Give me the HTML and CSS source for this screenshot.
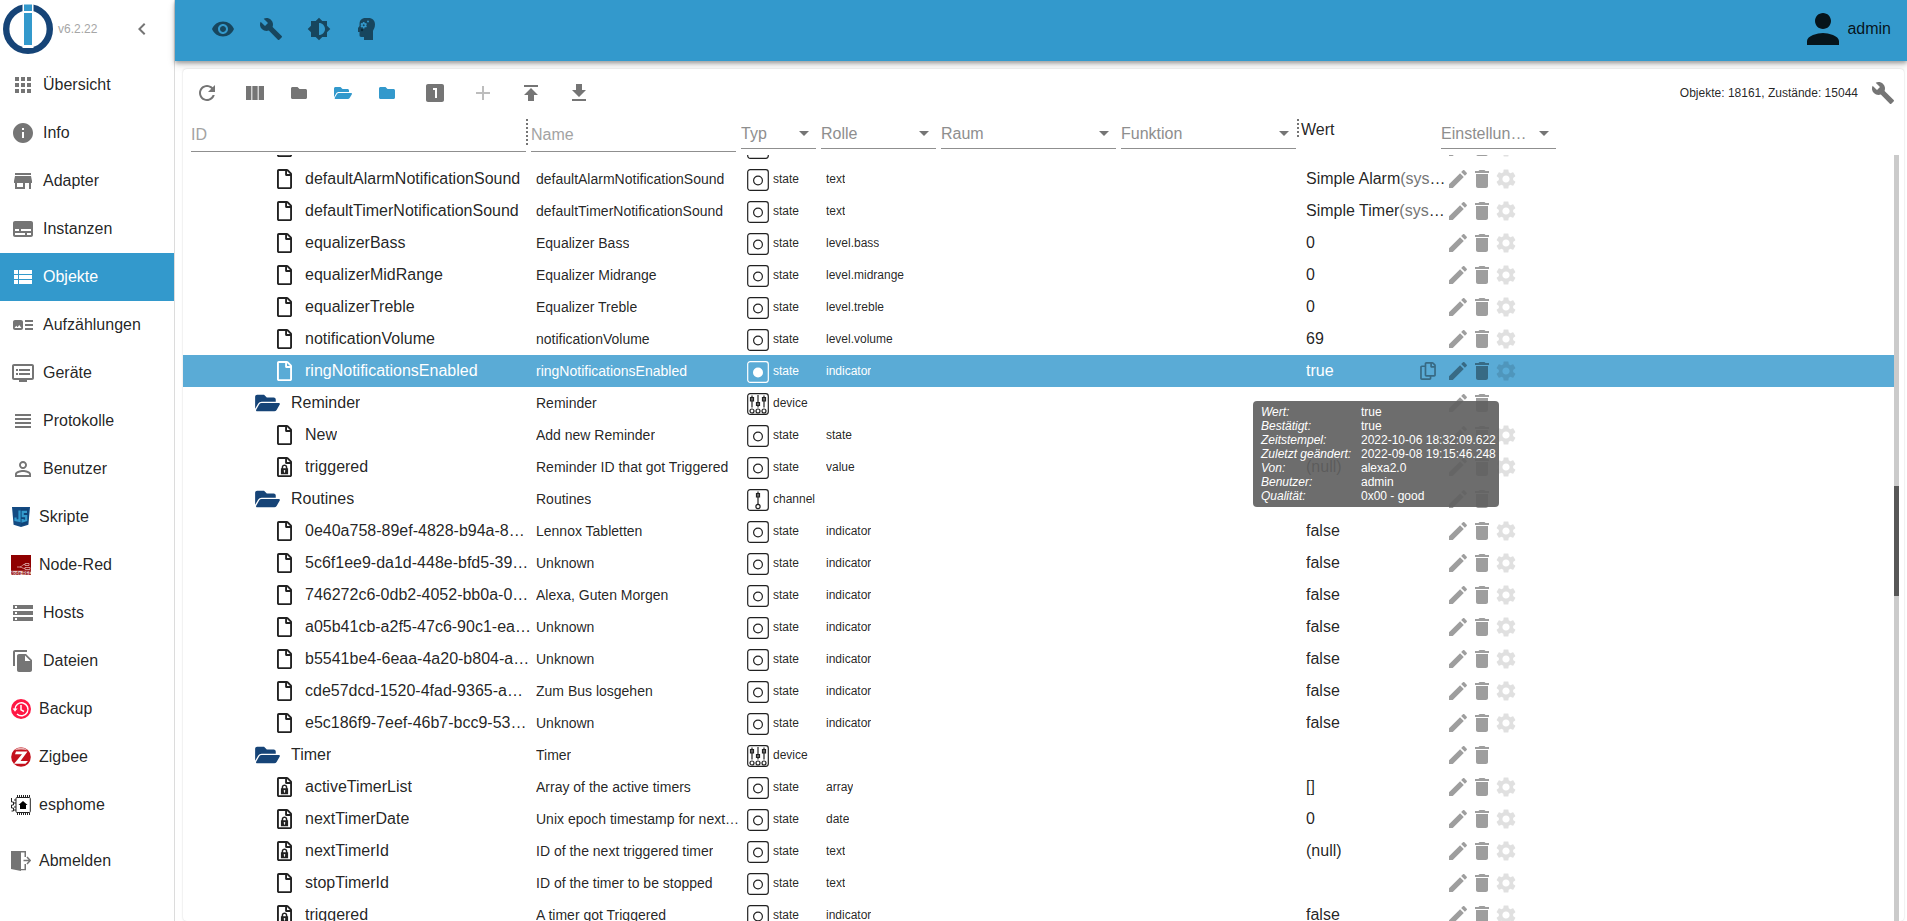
FILE: index.html
```html
<!DOCTYPE html>
<html lang="de">
<head>
<meta charset="utf-8">
<title>Objekte</title>
<link rel="stylesheet" href="styles.css">
</head>
<body>
<svg class="sprite" aria-hidden="true">
  <symbol id="i-edit" viewBox="0 0 24 24"><path d="M3 17.25V21h3.75L17.81 9.94l-3.75-3.75L3 17.25zM20.71 7.04c.39-.39.39-1.02 0-1.41l-2.34-2.34c-.39-.39-1.02-.39-1.41 0l-1.83 1.83 3.75 3.75 1.83-1.83z"/></symbol>
  <symbol id="i-delete" viewBox="0 0 24 24"><path d="M6 19c0 1.1.9 2 2 2h8c1.1 0 2-.9 2-2V7H6v12zM19 4h-3.5l-1-1h-5l-1 1H5v2h14V4z"/></symbol>
  <symbol id="i-settings" viewBox="0 0 24 24"><path d="M19.14 12.94c.04-.3.06-.61.06-.94 0-.32-.02-.64-.07-.94l2.03-1.58c.18-.14.23-.41.12-.61l-1.92-3.32c-.12-.22-.37-.29-.59-.22l-2.39.96c-.5-.38-1.03-.7-1.62-.94l-.36-2.54c-.04-.24-.24-.41-.48-.41h-3.84c-.24 0-.43.17-.47.41l-.36 2.54c-.59.24-1.13.57-1.62.94l-2.39-.96c-.22-.08-.47 0-.59.22L2.74 8.87c-.12.21-.08.47.12.61l2.03 1.58c-.05.3-.09.63-.09.94s.02.64.07.94l-2.03 1.58c-.18.14-.23.41-.12.61l1.92 3.32c.12.22.37.29.59.22l2.39-.96c.5.38 1.03.7 1.62.94l.36 2.54c.05.24.24.41.48.41h3.84c.24 0 .44-.17.47-.41l.36-2.54c.59-.24 1.13-.56 1.62-.94l2.39.96c.22.08.47 0 .59-.22l1.92-3.32c.12-.22.07-.47-.12-.61l-2.01-1.58zM12 15.6c-1.98 0-3.6-1.62-3.6-3.6s1.62-3.6 3.6-3.6 3.6 1.62 3.6 3.6-1.62 3.6-3.6 3.6z"/></symbol>
  <symbol id="i-build" viewBox="0 0 24 24"><path d="M22.7 19l-9.1-9.1c.9-2.3.4-5-1.5-6.9-2-2-5-2.4-7.4-1.3L9 6 6 9 1.6 4.7C.4 7.1.9 10.1 2.9 12.1c1.9 1.9 4.6 2.4 6.9 1.5l9.1 9.1c.4.4 1 .4 1.4 0l2.3-2.3c.5-.4.5-1.1.1-1.4z"/></symbol>
  <symbol id="i-folder" viewBox="0 0 512 512"><path d="M464 128H272l-64-64H48C21.49 64 0 85.49 0 112v288c0 26.51 21.49 48 48 48h416c26.51 0 48-21.49 48-48V176c0-26.51-21.49-48-48-48z"/></symbol>
  <symbol id="i-folder-open" viewBox="0 0 576 512"><path d="M572.694 292.093L500.27 416.248A63.997 63.997 0 0 1 444.989 448H45.025c-18.523 0-30.064-20.093-20.731-36.093l72.424-124.155A64 64 0 0 1 152 256h399.964c18.523 0 30.064 20.093 20.73 36.093zM152 224h328v-48c0-26.51-21.49-48-48-48H272l-64-64H48C21.49 64 0 85.49 0 112v278.046l69.077-118.418C86.214 242.25 117.989 224 152 224z"/></symbol>
  <symbol id="i-file" viewBox="0 0 384 512"><path d="M369.9 97.9L286 14C277 5 264.8-.1 252.1-.1H48C21.5 0 0 21.5 0 48v416c0 26.5 21.5 48 48 48h288c26.5 0 48-21.5 48-48V131.9c0-12.7-5.1-25-14.1-34zM332.1 128H256V51.9l76.1 76.1zM48 464V48h160v104c0 13.3 10.7 24 24 24h104v288H48z"/></symbol>
  <symbol id="i-file-lock" viewBox="0 0 384 512"><path d="M369.9 97.9L286 14C277 5 264.8-.1 252.1-.1H48C21.5 0 0 21.5 0 48v416c0 26.5 21.5 48 48 48h288c26.5 0 48-21.5 48-48V131.9c0-12.7-5.1-25-14.1-34zM332.1 128H256V51.9l76.1 76.1zM48 464V48h160v104c0 13.3 10.7 24 24 24h104v288H48z"/><path fill-rule="evenodd" d="M100 290h20v-25c0-95 144-95 144 0v25h20v150H100zM158 290h68v-25c0-45-68-45-68 0zM192 335c-26 0-26 36-10 42v28h20v-28c16-6 16-42-10-42z"/></symbol>
  <symbol id="i-copy" viewBox="0 0 448 512"><path d="M433.941 65.941l-51.882-51.882A48 48 0 0 0 348.118 0H176c-26.51 0-48 21.49-48 48v48H48c-26.51 0-48 21.49-48 48v320c0 26.51 21.49 48 48 48h224c26.51 0 48-21.49 48-48v-48h80c26.51 0 48-21.49 48-48V99.882a48 48 0 0 0-14.059-33.941zM266 464H54a6 6 0 0 1-6-6V150a6 6 0 0 1 6-6h74v224c0 26.51 21.49 48 48 48h96v42a6 6 0 0 1-6 6zm128-96H182a6 6 0 0 1-6-6V54a6 6 0 0 1 6-6h106v88c0 13.255 10.745 24 24 24h88v202a6 6 0 0 1-6 6zm6-256h-64V48h9.632c1.591 0 3.117.632 4.243 1.757l48.368 48.368a6 6 0 0 1 1.757 4.243V112z"/></symbol>
  <symbol id="i-state" viewBox="0 0 22 22"><rect x="0.7" y="0.7" width="20.6" height="20.6" rx="2.5" fill="none" stroke="currentColor" stroke-width="1.2"/><circle cx="11" cy="11.5" r="4.4" fill="none" stroke="currentColor" stroke-width="1.2"/></symbol>
  <symbol id="i-state-on" viewBox="0 0 22 22"><rect x="0.7" y="0.7" width="20.6" height="20.6" rx="2.5" fill="none" stroke="currentColor" stroke-width="1.2"/><circle cx="11" cy="11.5" r="5"/></symbol>
  <symbol id="i-channel" viewBox="0 0 22 22"><g fill="none" stroke="currentColor" stroke-width="1.2"><rect x="0.7" y="0.7" width="20.6" height="20.6" rx="2.5"/><path d="M11 2.5v13M9.500 4.500h3v3.500h-3z"/><circle cx="11" cy="17.5" r="2.1"/></g></symbol>
  <symbol id="i-device" viewBox="0 0 22 22"><g fill="none" stroke="currentColor" stroke-width="1.2"><rect x="0.7" y="0.7" width="20.6" height="20.6" rx="2.5"/><path d="M5 2.5v12M11 2v12.5M17 2.5v12M3.500 4.500h3v3.500h-3zM9.500 9.500h3v3h-3zM15.500 4.500h3v3.500h-3z"/><circle cx="5" cy="18" r="2"/><circle cx="11" cy="18" r="2"/><circle cx="17" cy="18" r="2"/></g></symbol>
</svg>

<div class="app">
  <aside class="sidebar">
    <div class="brand">
      <svg class="logo" viewBox="0 0 50 50"><circle cx="25" cy="25" r="21.8" fill="none" stroke="#164477" stroke-width="6.4"/><path fill="#fff" d="M19.5 0h11v44h-11z"/><path fill="#3399cc" d="M21 0.5h8V7h-8zM21 9h8v32h-8z"/></svg>
      <span class="version">v6.2.22</span>
      <button class="icon-btn collapse" aria-label="Menü einklappen"><svg class="i24" viewBox="0 0 24 24"><path d="M15.41 7.41L14 6l-6 6 6 6 1.41-1.41L10.83 12z"/></svg></button>
    </div>
    <nav class="menu">
      <a href="#"><svg class="i24" viewBox="0 0 24 24"><path d="M4 8h4V4H4v4zm6 12h4v-4h-4v4zm-6 0h4v-4H4v4zm0-6h4v-4H4v4zm6 0h4v-4h-4v4zm6-10v4h4V4h-4zm-6 4h4V4h-4v4zm6 6h4v-4h-4v4zm0 6h4v-4h-4v4z"/></svg>Übersicht</a>
      <a href="#"><svg class="i24" viewBox="0 0 24 24"><path d="M12 2C6.48 2 2 6.48 2 12s4.48 10 10 10 10-4.48 10-10S17.52 2 12 2zm1 15h-2v-6h2v6zm0-8h-2V7h2v2z"/></svg>Info</a>
      <a href="#"><svg class="i24" viewBox="0 0 24 24"><path d="M20 4H4v2h16V4zm1 10v-2l-1-5H4l-1 5v2h1v6h10v-6h4v6h2v-6h1v0zm-9 4H6v-4h6v4z"/></svg>Adapter</a>
      <a href="#"><svg class="i24" viewBox="0 0 24 24"><path d="M20 4H4c-1.1 0-2 .9-2 2v12c0 1.1.9 2 2 2h16c1.1 0 2-.9 2-2V6c0-1.1-.9-2-2-2zM4 12h4v2H4v-2zm10 6H4v-2h10v2zm6 0h-4v-2h4v2zm0-4H10v-2h10v2z"/></svg>Instanzen</a>
      <a href="#" class="active" aria-current="page"><svg class="i24" viewBox="0 0 24 24"><path d="M3 14h4v-4H3v4zm0 5h4v-4H3v4zM3 9h4V5H3v4zm5 5h13v-4H8v4zm0 5h13v-4H8v4zM8 5v4h13V5H8z"/></svg>Objekte</a>
      <a href="#"><svg class="i24" viewBox="0 0 24 24"><path d="M22 13h-8v-2h8v2zm0-6h-8v2h8V7zm-8 10h8v-2h-8v2zm-2-8v6c0 1.1-.9 2-2 2H4c-1.1 0-2-.9-2-2V9c0-1.1.9-2 2-2h6c1.1 0 2 .9 2 2zm-1.5 6l-2.25-3-1.75 2.26-1.25-1.51L3.5 15h7z"/></svg>Aufzählungen</a>
      <a href="#"><svg class="i24" viewBox="0 0 24 24"><path d="M21 3H3c-1.1 0-2 .9-2 2v12c0 1.1.9 2 2 2h5v2h8v-2h5c1.1 0 1.99-.9 1.99-2L23 5c0-1.1-.9-2-2-2zm0 14H3V5h18v12zm-2-9H8v2h11V8zm0 4H8v2h11v-2zM7 8H5v2h2V8zm0 4H5v2h2v-2z"/></svg>Geräte</a>
      <a href="#"><svg class="i24" viewBox="0 0 24 24"><path d="M4 15h16v-2H4v2zm0 4h16v-2H4v2zm0-8h16V9H4v2zm0-6v2h16V5H4z"/></svg>Protokolle</a>
      <a href="#"><svg class="i24" viewBox="0 0 24 24"><path d="M12 5.9c1.16 0 2.1.94 2.1 2.1s-.94 2.1-2.1 2.1S9.9 9.16 9.9 8s.94-2.1 2.1-2.1m0 9c2.97 0 6.1 1.46 6.1 2.1v1.1H5.9V17c0-.64 3.13-2.1 6.1-2.1M12 4C9.79 4 8 5.79 8 8s1.79 4 4 4 4-1.79 4-4-1.79-4-4-4zm0 9c-2.67 0-8 1.34-8 4v3h16v-3c0-2.66-5.33-4-8-4z"/></svg>Benutzer</a>
      <a href="#" class="adapter"><svg class="i20" viewBox="0 0 20 20"><path fill="#134a82" d="M1 0h18l-1.6 17.8L10 20l-7.400-2.200z"/><path fill="#0d3b6b" d="M10 1.500h7.400L16 16.700 10 18.500z" opacity=".5"/><path fill="none" stroke="#3399cc" stroke-width="2.200" d="M8.500 3.500v10.300L4.500 13v-2.500M16 4.800H11.700v4.400h3.500v4l-3.600 1v-2.200"/></svg>Skripte</a>
      <a href="#" class="adapter"><svg class="i20" viewBox="0 0 20 20"><path fill="#8f0000" d="M0 0h20v20H0z"/><path fill="none" stroke="#e0b0b0" stroke-width=".8" d="M6 12h3c2 0 2-2.500 4-2.500h1M9 12c2 0 2 1.500 5 1.500M14 8.500h4v2h-4zM14 12.500h5v2h-5z"/><path fill="#e9c8c8" d="M0 15.800h20V20H0z"/><text x="10" y="19.500" font-size="4.500" font-weight="bold" text-anchor="middle" fill="#8f0000" font-family="Liberation Sans, sans-serif">Node-RED</text></svg>Node-Red</a>
      <a href="#"><svg class="i24" viewBox="0 0 24 24"><path d="M2 20h20v-4H2v4zm2-3h2v2H4v-2zM2 4v4h20V4H2zm4 3H4V5h2v2zm-4 7h20v-4H2v4zm2-3h2v2H4v-2z"/></svg>Hosts</a>
      <a href="#"><svg class="i24" viewBox="0 0 24 24"><path d="M16 1H4c-1.1 0-2 .9-2 2v14h2V3h12V1zm-1 4l6 6v10c0 1.1-.9 2-2 2H7.99C6.89 23 6 22.1 6 21l.01-14c0-1.1.89-2 1.99-2h7zm-1 7h5.5L14 6.5V12z"/></svg>Dateien</a>
      <a href="#" class="adapter"><svg class="i20" viewBox="0 0 20 20"><circle cx="10" cy="10" r="10" fill="#ff1744"/><path fill="none" stroke="#fff" stroke-width="1.500" d="M4 10.500a6.500 6.500 0 1 1 2 4.500M10 6v4.800l3 1.700"/><path fill="#fff" d="M1.600 9.500h5L4 12.800z"/></svg>Backup</a>
      <a href="#" class="adapter"><svg class="i20" viewBox="0 0 20 20"><circle cx="10" cy="10" r="9.800" fill="#c4101c"/><path fill="#e8b5b5" d="M3.500 3.200a9.400 9.400 0 0 1 13 0c-4-1-9-1-13 0z"/><path fill="#fff" d="M5 4.500h11.500L9.500 14H17l-2.500 2.700H3L11 7.200H4z"/></svg>Zigbee</a>
      <a href="#" class="adapter"><svg class="i20" viewBox="0 0 20 20"><g fill="none" stroke="#222"><rect x="5" y="2.500" width="14.300" height="15" rx="1"/><path stroke-width="2" stroke-dasharray="1 1" d="M6 1h13M6 19h13"/><path d="M.5 3v4h2v3h-2v3h2v3h-2M3 5h2M3 8h2M3 12h2M3 15h2"/></g><path fill="#000" d="M12 6l4.500 4H15v4H9v-4H7.500z"/></svg>esphome</a>
      <a href="#" class="adapter logout"><svg class="i20" viewBox="0 0 20 20"><path d="M0 0h15v6h-1.500V1.500H10V18h3.500v-5H15v6.300h-5V20L0 18z"/><path fill="none" stroke="#757575" stroke-width="1.500" d="M12.500 9.500H19M16 6l3.300 3.500L16 13"/></svg>Abmelden</a>
    </nav>
  </aside>

  <div class="main">
    <header class="appbar">
      <button class="icon-btn" aria-label="Ansicht"><svg class="i24" viewBox="0 0 24 24"><path d="M12 4.5C7 4.5 2.73 7.61 1 12c1.73 4.39 6 7.5 11 7.5s9.27-3.11 11-7.5c-1.73-4.39-6-7.5-11-7.5zM12 17c-2.76 0-5-2.24-5-5s2.24-5 5-5 5 2.24 5 5-2.24 5-5 5zm0-8c-1.66 0-3 1.34-3 3s1.34 3 3 3 3-1.34 3-3-1.34-3-3-3z"/></svg></button>
      <button class="icon-btn" aria-label="Systemeinstellungen"><svg class="i24"><use href="#i-build"/></svg></button>
      <button class="icon-btn" aria-label="Farbschema"><svg class="i24" viewBox="0 0 24 24"><path d="M20 15.31L23.31 12 20 8.69V4h-4.69L12 .69 8.69 4H4v4.69L.69 12 4 15.31V20h4.69L12 23.31 15.31 20H20v-4.69zM12 18V6c3.31 0 6 2.69 6 6s-2.69 6-6 6z"/></svg></button>
      <button class="icon-btn" aria-label="Expertenmodus"><svg class="i24" viewBox="1.5 0 24 24"><path fill-rule="evenodd" d="M12 1h3c4 0 6.500 2.500 6.500 6.500 0 3.500-1.500 5-2 6.500v9h-9v-3H8c-1.700 0-2-.7-2-2v-3H4.500V11L6 9V7c0-3.500 2-6 6-6zM9.500 5l-.4 1.300-1.300-.3-.8 1.300 1 .9-1 .9.800 1.300 1.300-.3.4 1.300h1.400l.4-1.300 1.300.3.800-1.300-1-.9 1-.9-.8-1.300-1.300.3L10.900 5z"/><circle cx="10.200" cy="8.200" r="1"/><circle cx="14.500" cy="4.500" r="1" fill="#3399cc"/><circle cx="8.500" cy="13" r="1.200" fill="#0b2a3a"/></svg></button>
      <div class="user"><svg viewBox="0 0 24 24"><path d="M12 12c2.21 0 4-1.79 4-4s-1.79-4-4-4-4 1.79-4 4 1.79 4 4 4zm0 2c-2.67 0-8 1.34-8 4v2h16v-2c0-2.66-5.33-4-8-4z"/></svg><span>admin</span></div>
    </header>

    <main class="card">
      <div class="toolbar">
        <button class="icon-btn" aria-label="Aktualisieren"><svg class="i24" viewBox="0 0 24 24"><path d="M17.65 6.35C16.2 4.9 14.21 4 12 4c-4.42 0-7.99 3.58-7.99 8s3.57 8 7.99 8c3.73 0 6.84-2.55 7.73-6h-2.08c-.82 2.33-3.04 4-5.65 4-3.31 0-6-2.69-6-6s2.69-6 6-6c1.66 0 3.14.69 4.22 1.78L13 11h7V4l-2.35 2.35z"/></svg></button>
        <button class="icon-btn" aria-label="Spalten"><svg class="i24" viewBox="0 0 24 24"><path d="M14.67 5v14H9.33V5h5.34zm1 14H21V5h-5.33v14zm-7.34 0V5H3v14h5.33z"/></svg></button>
        <button class="icon-btn small" aria-label="Alle zuklappen"><svg class="i16"><use href="#i-folder"/></svg></button>
        <button class="icon-btn small blue" aria-label="Alle aufklappen"><svg class="i18"><use href="#i-folder-open"/></svg></button>
        <button class="icon-btn small blue" aria-label="Eine Ebene zuklappen"><svg class="i16"><use href="#i-folder"/></svg></button>
        <button class="icon-btn" aria-label="Zustände anzeigen"><svg class="i24" viewBox="0 0 24 24"><path d="M19 3H5c-1.1 0-2 .9-2 2v14c0 1.1.9 2 2 2h14c1.1 0 2-.9 2-2V5c0-1.1-.9-2-2-2zm-5 14h-2V9h-2V7h4v10z"/></svg></button>
        <button class="icon-btn" disabled aria-label="Objekt hinzufügen"><svg class="i24" viewBox="0 0 24 24"><path d="M19 13h-6v6h-2v-6H5v-2h6V5h2v6h6v2z"/></svg></button>
        <button class="icon-btn" aria-label="Hochladen"><svg class="i24" viewBox="0 0 24 24"><path d="M5 4v2h14V4H5zm0 10h4v6h6v-6h4l-7-7-7 7z"/></svg></button>
        <button class="icon-btn" aria-label="Herunterladen"><svg class="i24" viewBox="0 0 24 24"><path d="M19 9h-4V3H9v6H5l7 7 7-7zM5 18v2h14v-2H5z"/></svg></button>
        <span class="counts">Objekte: 18161, Zustände: 15044</span>
        <button class="icon-btn wrench" aria-label="Bearbeiten"><svg class="i24"><use href="#i-build"/></svg></button>
      </div>

      <table class="objects">
        <thead>
          <tr>
            <th class="h-id"><input type="text" placeholder="ID" aria-label="ID"></th>
            <th class="h-name"><input type="text" placeholder="Name" aria-label="Name"></th>
            <th><select aria-label="Typ"><option>Typ</option></select></th>
            <th><select aria-label="Rolle"><option>Rolle</option></select></th>
            <th><select aria-label="Raum"><option>Raum</option></select></th>
            <th class="h-func"><select aria-label="Funktion"><option>Funktion</option></select></th>
            <th class="h-value">Wert</th>
            <th><select class="narrow" aria-label="Einstellungen"><option>Einstellungen</option></select></th>
          </tr>
        </thead>
        <tbody id="rows"></tbody>
      </table>
    </main>
  </div>
</div>
<script src="app.js"></script>
</body>
</html>
```

FILE: styles.css
```css
* { box-sizing: border-box; }

body {
  margin: 0;
  background: #fff;
  color: rgba(0, 0, 0, .87);
  font-family: "Liberation Sans", Arial, sans-serif;
  font-size: 16px;
  line-height: 24px;
}

svg { display: block; flex: none; fill: currentColor; }
.sprite { display: none; }
.i24 { width: 24px; height: 24px; }
.i20 { width: 20px; height: 20px; }
.i18 { width: 18px; height: 16px; }
.i16 { width: 16px; height: 16px; }

button, input, select { font: inherit; }

.icon-btn {
  display: flex;
  align-items: center;
  justify-content: center;
  width: 48px;
  height: 48px;
  padding: 0;
  border: 0;
  background: none;
  color: #757575;
}
.icon-btn.small { width: 44px; padding-right: 4px; }
.icon-btn.blue { color: #3399cc; }
.icon-btn:disabled { color: #bdbdbd; }

.app { display: flex; height: 100vh; overflow: hidden; }

/* Sidebar */
.sidebar { flex: none; width: 175px; border-right: 1px solid #dcdcdc; }
.brand {
  display: flex;
  align-items: center;
  height: 61px;
  padding: 0 8px 4px 3px;
}
.logo { width: 50px; height: 50px; }
.version { margin-left: 5px; font-size: 12px; color: #a6a6a6; }
.collapse { margin-left: auto; }
.menu a {
  display: flex;
  align-items: center;
  gap: 8px;
  height: 48px;
  padding-left: 11px;
  color: inherit;
  text-decoration: none;
}
.menu a svg { color: #757575; }
.menu .active, .menu .active svg { color: #fff; }
.menu .active { background: #3399cc; }
.menu .logout { margin-top: 8px; }

/* Header bar */
.main { display: flex; flex-direction: column; flex: 1; min-width: 0; }
.appbar {
  display: flex;
  align-items: center;
  flex: none;
  height: 61px;
  padding: 0 16px 4px 24px;
  background: #3399cc;
  box-shadow: 0 2px 4px rgba(0, 0, 0, .3), 0 4px 8px rgba(0, 0, 0, .14);
}
.appbar .icon-btn { color: rgba(0, 0, 0, .54); }
.user { display: flex; align-items: center; margin-left: auto; }
.user svg { width: 48px; height: 48px; }

/* Object browser */
.card {
  display: flex;
  flex-direction: column;
  flex: 1;
  min-height: 0;
  margin: 8px 3px 0 8px;
  border-radius: 4px;
  background: #fff;
  box-shadow: 0 0 2px rgba(0, 0, 0, .2);
}
.toolbar { display: flex; align-items: center; flex: none; height: 48px; }
.counts { margin-left: auto; font-size: 12px; }
.wrench { width: 46px; padding-left: 4px; }

.objects { display: flex; flex-direction: column; flex: 1; min-height: 0; }
.objects thead { display: block; flex: none; height: 38px; }
.objects tr {
  display: grid;
  grid-template-columns: 348px 211px 79px 120px 180px 180px 145px 1fr;
}
.objects thead tr { grid-template-columns: 348px 210px 80px 120px 180px 180px 140px 1fr; }
th, td { padding: 0; font-weight: 400; text-align: left; white-space: nowrap; min-width: 0; }

thead th { height: 36px; padding-right: 5px; }
th input, th select {
  display: block;
  width: 100%;
  padding: 2px 0 0;
  border: 0;
  border-bottom: 1px solid #8f8f8f;
  border-radius: 0;
  background: none;
  color: #8e8e8e;
  outline: 0;
}
th input { height: 35px; }
th input::placeholder { color: #a3a3a3; opacity: 1; }
th select {
  height: 32px;
  padding-right: 24px;
  appearance: none;
  text-overflow: ellipsis;
  background: url("data:image/svg+xml,%3Csvg xmlns='http://www.w3.org/2000/svg' width='10' height='5'%3E%3Cpath fill='%23757575' d='M0 0h10L5 5z'/%3E%3C/svg%3E") no-repeat right 7px top 14px;
}
th .narrow { width: 115px; }
.h-id { padding-left: 8px; }
.h-id, .h-func {
  background: repeating-linear-gradient(#757575 0 2px, transparent 2px 4px) no-repeat right 3px top 2px / 2px 28px;
}
.h-func { background-size: 2px 20px; background-position: right 2px top 2px; }
.h-value { padding-top: 1px; }

tbody {
  display: block;
  flex: 1;
  min-height: 0;
  overflow: hidden;
  margin-right: 5px;
  padding-right: 5px;
  background:
    linear-gradient(#575757, #575757) no-repeat right 50.5% / 5px 110px,
    linear-gradient(#cbcbcb, #cbcbcb) no-repeat right top / 5px 100%;
}
tbody tr { position: relative; height: 32px; }
tbody tr:first-child { margin-top: -24px; }
tbody td { display: flex; align-items: center; height: 32px; padding-left: 5px; }
td span { overflow: hidden; text-overflow: ellipsis; }

td.id { gap: 13px; padding-left: 94px; }
td.id svg { width: 15px; height: 20px; }
tr.branch td.id { gap: 11px; padding-left: 72px; }
tr.branch td.id svg { width: 25px; height: 22px; color: #164477; }
td.name { font-size: 14px; }
td.type { gap: 4px; font-size: 12px; }
td.type svg { width: 22px; height: 22px; margin-top: 2px; }
td.role { font-size: 12px; }
td.value small { font-size: 16px; color: #757575; }
td.value button { margin-left: auto; margin-right: 8px; }
td button {
  display: flex;
  padding: 0;
  border: 0;
  background: none;
  color: inherit;
}
td.actions { padding-left: 0; color: rgba(0, 0, 0, .38); }
td.actions button:nth-child(3) { color: rgba(0, 0, 0, .12); }
td .copy svg { width: 20px; height: 18px; }

tr.selected { background: #5aabd6; color: #fff; }
tr.selected .actions, tr.selected .copy { color: rgba(0, 0, 0, .38); }

.tooltip {
  position: absolute;
  z-index: 2;
  top: 46px;
  left: 1070px;
  display: grid;
  grid-template-columns: 100px 134px;
  width: 246px;
  margin: 0;
  padding: 4px 8px;
  border-radius: 4px;
  background: rgba(97, 97, 97, .92);
  color: #fff;
  font-size: 12px;
  line-height: 14px;
}
.tooltip dt { font-style: italic; }
.tooltip dd { margin: 0; white-space: nowrap; }
```

FILE: app.js
```js
// [id, name, type, role, value, flags]  flags: L = read only, S = selected
const objects = [
  ["", "", "state", "", "", ""],
  ["defaultAlarmNotificationSound", "defaultAlarmNotificationSound", "state", "text", "Simple Alarm<small>(system_alerts)</small>", ""],
  ["defaultTimerNotificationSound", "defaultTimerNotificationSound", "state", "text", "Simple Timer<small>(system_alerts)</small>", ""],
  ["equalizerBass", "Equalizer Bass", "state", "level.bass", "0", ""],
  ["equalizerMidRange", "Equalizer Midrange", "state", "level.midrange", "0", ""],
  ["equalizerTreble", "Equalizer Treble", "state", "level.treble", "0", ""],
  ["notificationVolume", "notificationVolume", "state", "level.volume", "69", ""],
  ["ringNotificationsEnabled", "ringNotificationsEnabled", "state", "indicator", "true", "S"],
  ["Reminder", "Reminder", "device", "", "", ""],
  ["New", "Add new Reminder", "state", "state", "", ""],
  ["triggered", "Reminder ID that got Triggered", "state", "value", "(null)", "L"],
  ["Routines", "Routines", "channel", "", "", ""],
  ["0e40a758-89ef-4828-b94a-8c017be2", "Lennox Tabletten", "state", "indicator", "false", ""],
  ["5c6f1ee9-da1d-448e-bfd5-39b25d7c", "Unknown", "state", "indicator", "false", ""],
  ["746272c6-0db2-4052-bb0a-0d13aa48", "Alexa, Guten Morgen", "state", "indicator", "false", ""],
  ["a05b41cb-a2f5-47c6-90c1-ea24c0d9", "Unknown", "state", "indicator", "false", ""],
  ["b5541be4-6eaa-4a20-b804-a5350e11", "Unknown", "state", "indicator", "false", ""],
  ["cde57dcd-1520-4fad-9365-a8461f3b", "Zum Bus losgehen", "state", "indicator", "false", ""],
  ["e5c186f9-7eef-46b7-bcc9-5357d2a0", "Unknown", "state", "indicator", "false", ""],
  ["Timer", "Timer", "device", "", "", ""],
  ["activeTimerList", "Array of the active timers", "state", "array", "[]", "L"],
  ["nextTimerDate", "Unix epoch timestamp for next timer", "state", "date", "0", "L"],
  ["nextTimerId", "ID of the next triggered timer", "state", "text", "(null)", "L"],
  ["stopTimerId", "ID of the timer to be stopped", "state", "text", "", ""],
  ["triggered", "A timer got Triggered", "state", "indicator", "false", "L"],
];

const details = [
  ["Wert", "true"],
  ["Bestätigt", "true"],
  ["Zeitstempel", "2022-10-06 18:32:09.622"],
  ["Zuletzt geändert", "2022-09-08 19:15:46.248"],
  ["Von", "alexa2.0"],
  ["Benutzer", "admin"],
  ["Qualität", "0x00 - good"],
];

const icon = (name, cls = "") => `<svg class="${cls}"><use href="#i-${name}"/></svg>`;
const button = (name, label) => `<button aria-label="${label}">${icon(name, "i24")}</button>`;

document.getElementById("rows").innerHTML = objects.map(([id, name, type, role, value, flags]) => {
  const leaf = type === "state";
  const selected = flags.includes("S");
  const idIcon = leaf ? (flags.includes("L") ? "file-lock" : "file") : "folder-open";
  const tip = details.map(([k, v]) => `<dt>${k}:</dt><dd>${v}</dd>`).join("");
  return `<tr class="${selected ? "selected" : ""}${leaf ? "" : "branch"}">
    <td class="id">${icon(idIcon)}<span>${id}</span></td>
    <td class="name"><span>${name}</span></td>
    <td class="type">${icon(selected ? "state-on" : type)}${id ? type : ""}</td>
    <td class="role"><span>${role}</span></td>
    <td></td><td></td>
    <td class="value"><span>${value}</span>${selected ? `<button class="copy" aria-label="Kopieren">${icon("copy")}</button>` : ""}</td>
    <td class="actions">${button("edit", "Bearbeiten")}${button("delete", "Löschen")}${leaf ? button("settings", "Einstellungen") : ""}${selected ? `<dl class="tooltip">${tip}</dl>` : ""}</td>
  </tr>`;
}).join("");
```
